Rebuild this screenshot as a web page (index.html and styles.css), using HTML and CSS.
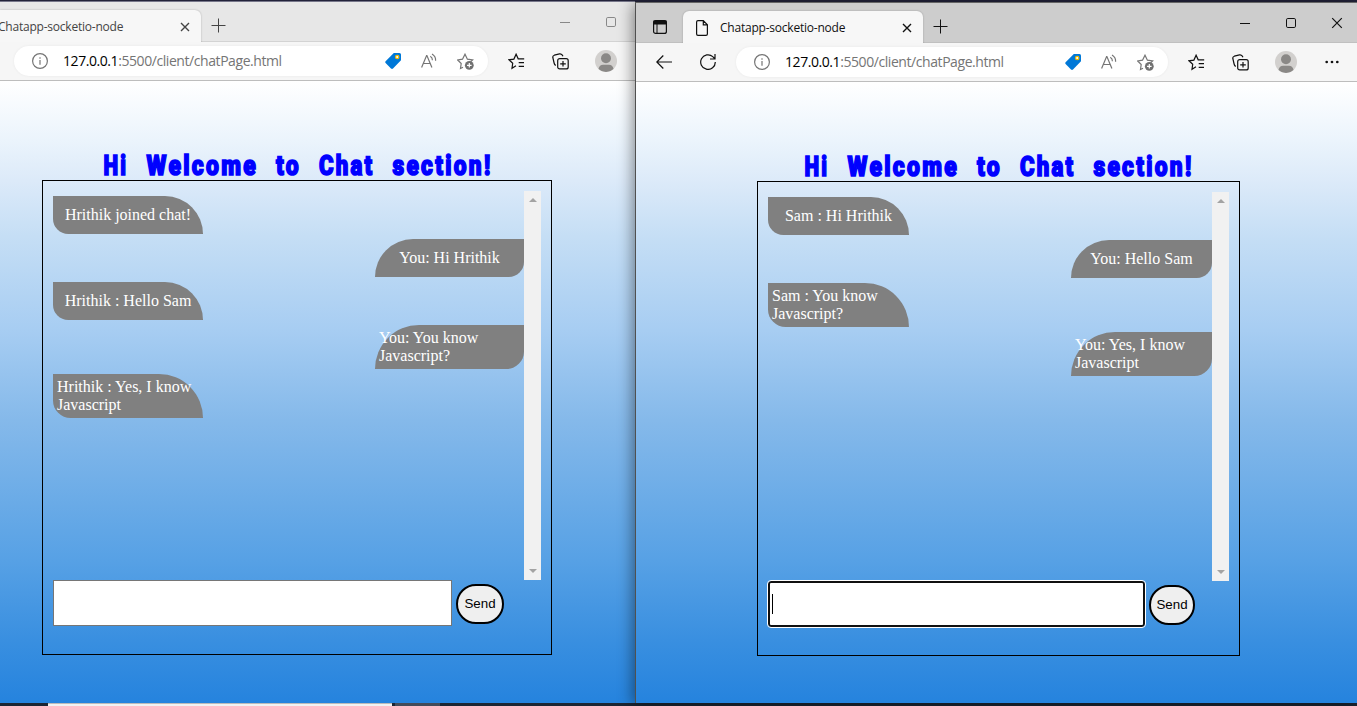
FILE: index.html
```html
<!DOCTYPE html>
<html lang="en">
<head>
<meta charset="utf-8">
<title>Chatapp-socketio-node</title>
<link rel="stylesheet" href="styles.css">
</head>
<body>
<svg class="defs" aria-hidden="true">
  <defs>
    <symbol id="close" viewBox="0 0 10 10"><path d="M1 1l8 8M9 1L1 9"/></symbol>
    <symbol id="plus" viewBox="0 0 15 15"><path d="M7.500 .5v14M.5 7.500h14"/></symbol>
    <symbol id="min" viewBox="0 0 10 10"><path d="M0 5.500h10"/></symbol>
    <symbol id="max" viewBox="0 0 10 10"><rect x=".5" y=".5" width="9" height="9" rx="1.300"/></symbol>
    <symbol id="info" viewBox="0 0 16 16"><circle cx="8" cy="8" r="7.400"/><path d="M8 7v4.700M8 4.300v1.400"/></symbol>
    <symbol id="tag" viewBox="0 0 16 16"><path d="M8.800 0H14.500Q16 0 16 1.500V7.200L8 15.500Q7 16.300 6 15.400L.6 10Q-.2 9 .6 8.200Z" fill="#0078d7" stroke="none"/><circle cx="12.200" cy="4" r="1.700" fill="#fff" stroke="#f0b800"/></symbol>
    <symbol id="read" viewBox="0 0 16 16"><path d="M.6 14.500L5.600 2.500h.3L10.900 14.500M2.300 10.500h6.900M9.300 3.200Q11.600 4.500 11.400 7.200M11 .9Q14.900 3.200 14.600 7.700"/></symbol>
    <symbol id="star" viewBox="0 0 17 17"><path d="M6 14.200L3.500 15.500 4.200 10.500.7 7l4.800-.8L8 1.200l2.400 5 5.200.8-2 1.700"/><circle cx="12.300" cy="12.300" r="4.400" fill="#707070" stroke="none"/><path d="M12.300 10v4.600M10 12.300h4.600" stroke="#fff"/></symbol>
    <symbol id="favs" viewBox="0 0 17 17"><path d="M8 12.800L4 15.300 4.700 10.300 1 6.800l4.900-.7L8.100 1.200l2.100 4.600h6M10.700 9.700H16M10.700 13.400H16"/></symbol>
    <symbol id="coll" viewBox="0 0 17 17"><rect x="5.700" y="5.700" width="10.500" height="10.200" rx="2"/><path d="M11 8v5.600M8.200 10.800h5.600M3.700 12.500Q2.500 11.700 2.100 10L.8 4.500Q.5 2.800 2.300 2.200L7.500.9Q9.800.4 11 3.300"/></symbol>
    <symbol id="avatar" viewBox="0 0 22 22"><circle cx="11" cy="11" r="11" fill="#d2d0ce" stroke="none"/><circle cx="11" cy="8.300" r="5" fill="#8a8886" stroke="none"/><path d="M3.500 19Q4.500 14.800 8 14.800H14Q17.500 14.800 18.500 19A11 11 0 0 1 3.500 19Z" fill="#8a8886" stroke="none"/></symbol>
    <symbol id="dots" viewBox="0 0 14 4"><g fill="#111" stroke="none"><circle cx="1.700" cy="2" r="1.350"/><circle cx="7" cy="2" r="1.350"/><circle cx="12.300" cy="2" r="1.350"/></g></symbol>
    <symbol id="back" viewBox="0 0 16 14"><path d="M16 7H.8M7.300.5L.8 7l6.500 6.500"/></symbol>
    <symbol id="reload" viewBox="0 0 16 16"><path d="M15.300 8A7.300 7.300 0 1 1 12.800 2.600L14.800 4.800M15 0v5h-5"/></symbol>
    <symbol id="panes" viewBox="0 0 14 14"><rect x=".6" y=".6" width="12.800" height="12.800" rx="2"/><path d="M1 1h12v3H1z" fill="#111"/><path d="M4 4v9.500" stroke-width="1"/></symbol>
    <symbol id="file" viewBox="0 0 12 16"><path d="M7.300.6H2Q.6.6.6 2V14Q.6 15.400 2 15.400H10Q11.400 15.400 11.400 14V4.800ZM7.300.6V4.800h4.100"/></symbol>
  </defs>
</svg>
<div class="desktop">
  <section class="window left">
    <header class="tabs">
      <div class="tab"><span class="title">Chatapp-socketio-node</span><svg class="x"><use href="#close"/></svg></div>
      <span class="newtab"><svg class="i15"><use href="#plus"/></svg></span>
      <div class="controls"><span><svg class="i10"><use href="#min"/></svg></span><span><svg class="i10"><use href="#max"/></svg></span></div>
    </header>
    <nav class="toolbar">
      <div class="address">
        <svg class="info"><use href="#info"/></svg>
        <span class="url"><b>127.0.0.1</b>:5500/client/chatPage.html</span>
        <span class="slot"><svg class="i16"><use href="#tag"/></svg></span><span class="slot"><svg class="i16"><use href="#read"/></svg></span><span class="slot"><svg class="i17"><use href="#star"/></svg></span>
      </div>
      <span class="tool"><svg class="i17"><use href="#favs"/></svg></span><span class="tool"><svg class="i17"><use href="#coll"/></svg></span><span class="tool wide"><svg class="i22"><use href="#avatar"/></svg></span>
    </nav>
    <main class="page">
      <div class="chat">
        <h1><svg class="heading" viewBox="0 0 390 34"><text x="1.500" y="27" textLength="24.500" lengthAdjust="spacingAndGlyphs">Hi</text><text x="44.500" y="27" textLength="111.500" lengthAdjust="spacingAndGlyphs">Welcome</text><text x="174" y="27" textLength="25" lengthAdjust="spacingAndGlyphs">to</text><text x="217" y="27" textLength="55.500" lengthAdjust="spacingAndGlyphs">Chat</text><text x="290.500" y="27" textLength="100" lengthAdjust="spacingAndGlyphs">section!</text></svg></h1>
        <div class="box">
          <div class="log">
            <div class="messages">
              <div class="msg in"><span>Hrithik joined chat!</span></div>
              <div class="msg out"><span>You: Hi Hrithik</span></div>
              <div class="msg in"><span>Hrithik : Hello Sam</span></div>
              <div class="msg out"><span>You: You know<br>Javascript?</span></div>
              <div class="msg in"><span>Hrithik : Yes, I know<br>Javascript</span></div>
            </div>
            <div class="scroll"><i class="up"></i><i class="down"></i></div>
          </div>
          <div class="form"><div class="field"></div><button class="send">Send</button></div>
        </div>
      </div>
    </main>
  </section>
  <section class="window right">
    <header class="tabs">
      <span class="panes"><svg class="i14"><use href="#panes"/></svg></span>
      <div class="tab"><svg class="file"><use href="#file"/></svg><span class="title">Chatapp-socketio-node</span><svg class="x"><use href="#close"/></svg></div>
      <span class="newtab"><svg class="i15"><use href="#plus"/></svg></span>
      <div class="controls"><span><svg class="i10"><use href="#min"/></svg></span><span><svg class="i10"><use href="#max"/></svg></span><span><svg class="i11"><use href="#close"/></svg></span></div>
    </header>
    <nav class="toolbar">
      <span class="tool back"><svg class="i16"><use href="#back"/></svg></span><span class="tool"><svg class="i16"><use href="#reload"/></svg></span>
      <div class="address">
        <svg class="info"><use href="#info"/></svg>
        <span class="url"><b>127.0.0.1</b>:5500/client/chatPage.html</span>
        <span class="slot"><svg class="i16"><use href="#tag"/></svg></span><span class="slot"><svg class="i16"><use href="#read"/></svg></span><span class="slot"><svg class="i17"><use href="#star"/></svg></span>
      </div>
      <span class="tool"><svg class="i17"><use href="#favs"/></svg></span><span class="tool"><svg class="i17"><use href="#coll"/></svg></span><span class="tool wide"><svg class="i22"><use href="#avatar"/></svg></span><span class="tool"><svg class="dots"><use href="#dots"/></svg></span>
    </nav>
    <main class="page">
      <div class="chat">
        <h1><svg class="heading" viewBox="0 0 390 34"><text x="1.500" y="27" textLength="24.500" lengthAdjust="spacingAndGlyphs">Hi</text><text x="44.500" y="27" textLength="111.500" lengthAdjust="spacingAndGlyphs">Welcome</text><text x="174" y="27" textLength="25" lengthAdjust="spacingAndGlyphs">to</text><text x="217" y="27" textLength="55.500" lengthAdjust="spacingAndGlyphs">Chat</text><text x="290.500" y="27" textLength="100" lengthAdjust="spacingAndGlyphs">section!</text></svg></h1>
        <div class="box">
          <div class="log">
            <div class="messages">
              <div class="msg in"><span>Sam : Hi Hrithik</span></div>
              <div class="msg out"><span>You: Hello Sam</span></div>
              <div class="msg in"><span>Sam : You know<br>Javascript?</span></div>
              <div class="msg out"><span>You: Yes, I know<br>Javascript</span></div>
            </div>
            <div class="scroll"><i class="up"></i><i class="down"></i></div>
          </div>
          <div class="form"><div class="field focused"><i class="caret"></i></div><button class="send">Send</button></div>
        </div>
      </div>
    </main>
  </section>
</div>
<footer class="taskbar"><i class="search"></i><i class="task"></i></footer>
</body>
</html>
```
FILE: styles.css
```css
* { box-sizing: border-box; }
body { margin: 0; width: 1357px; height: 706px; overflow: hidden; background: #23233a; font-family: "Open Sans", sans-serif; }
svg { display: block; fill: none; stroke: currentColor; stroke-width: 1.2; flex: none; }
.defs { position: absolute; width: 0; height: 0; }
.desktop { display: flex; height: 703px; }
.window { display: flex; flex-direction: column; overflow: hidden; }
.left { width: 635px; margin-top: 1px; border-top: 1px solid #77778a; }
.right { width: 722px; margin-top: 2px; border-top: 1px solid #666; border-left: 1px solid #505050; z-index: 1; box-shadow: -2px 2px 14px rgba(0,0,0,.45); }

.tabs { display: flex; height: 40px; flex: none; background: #e7e7e7; border-bottom: 1px solid #d3d3d3; color: #444; }
.right .tabs { background: #cdcdcd; border-color: #c0c0c0; color: #111; }
.tab { display: flex; align-items: center; width: 201px; height: 33px; margin-top: 8px; padding-right: 11px; background: #f7f7f7; border-radius: 0 6px 0 0; box-shadow: 0 0 2px rgba(0,0,0,.25); }
.right .tab { width: 240px; padding: 0 11px 0 13px; border-radius: 6px 6px 0 0; }
.title { flex: 1; margin-left: -2px; font-size: 12px; line-height: 18px; white-space: nowrap; letter-spacing: -.22px; }
.right .title { margin-left: 12px; }
.x { width: 10px; height: 10px; stroke-width: 1.4; }
.file { width: 12px; height: 16px; }
.panes { display: flex; width: 47px; padding-top: 8px; align-items: center; justify-content: center; }
.newtab { display: flex; width: 34px; padding-top: 8px; align-items: center; justify-content: center; }
.controls { display: flex; margin-left: auto; margin-right: 1px; }
.left .controls { color: #888; }
.right .controls { margin-right: -3px; }
.controls span { display: flex; width: 46px; align-items: center; justify-content: center; }
.controls svg { stroke-width: 1; }
.i10 { width: 10px; height: 10px; }
.i11 { width: 12px; height: 12px; }
.i14 { width: 14px; height: 14px; }
.i15 { width: 15px; height: 15px; stroke-width: 1; }
.i16 { width: 16px; height: 16px; }
.i17 { width: 17px; height: 17px; }
.i22 { width: 22px; height: 22px; }
.dots { width: 14px; height: 4px; }

.toolbar { display: flex; align-items: center; height: 39px; flex: none; padding-left: 14px; background: #f6f6f6; border-bottom: 1px solid #bdbdbd; color: #111; }
.left .toolbar { padding-right: 5px; }
.right .toolbar { padding-left: 6px; padding-right: 3px; }
.address { display: flex; align-items: center; flex: 1; height: 30px; margin-right: 6px; padding: 0 5px 0 18px; border-radius: 15px; background: #fff; color: #757575; box-shadow: 0 0 3px rgba(0,0,0,.06); }
.right .address { margin-left: 6px; }
.info { width: 16px; height: 16px; }
.url { flex: 1; margin-left: 15px; font-size: 14px; line-height: 20px; letter-spacing: -.43px; white-space: nowrap; }
.url b { font-weight: 400; color: #000; }
.slot { display: flex; width: 36px; justify-content: center; }
.tool { display: flex; width: 44px; justify-content: center; }
.wide { width: 48px; }

.page { flex: 1; background: linear-gradient(#fff 0%, #ebf4fc 9.500%, #dceaf9 16%, #c5def5 25%, #a7cdf2 40%, #85b9ea 54.500%, #57a1e5 77%, #398fe0 90%, #2583de 100%); }
.chat { width: 510px; margin: 67px 0 0 42px; }
.right .chat { width: 483px; margin-left: 121px; }
h1 { margin: 0; height: 32px; display: flex; justify-content: center; }
.right h1 { padding-right: 1px; }
.heading { width: 390px; height: 34px; overflow: visible; font: 900 28px Roboto, sans-serif; letter-spacing: 2.8px; fill: #00f; stroke: #00f; stroke-width: 1.6; }
.box { height: 475px; border: 1px solid #000; padding: 10px; }
.log { display: flex; height: 389px; }
.messages { flex: 1; display: flex; flex-direction: column; gap: 5px; padding-top: 5px; }
.msg { display: flex; align-items: center; justify-content: center; width: 150px; height: 38px; background: gray; color: #fff; font: 16px/18px "Liberation Serif", serif; white-space: nowrap; }
.right .msg { width: 141px; }
.msg:has(br) { height: 44px; justify-content: flex-start; padding-left: 4px; }
.in { border-radius: 0 50px 0 20px; }
.out { align-self: flex-end; border-radius: 50px 0 20px 0; }
.left .out { width: 149px; }
.scroll { display: flex; flex-direction: column; justify-content: space-between; align-items: center; width: 17px; padding: 7px 0; background: #f1f1f1; }
.up, .down { border: 4px solid transparent; }
.up { border-top: 0; border-bottom-color: #a3a3a3; }
.down { border-bottom: 0; border-top-color: #a3a3a3; }
.form { display: flex; align-items: center; gap: 4px; height: 46px; }
.field { width: 399px; height: 46px; background: #fff; border: 1px solid #767676; }
.focused { width: 377px; border: 2px solid #101010; border-radius: 3px; outline: 1px solid #fff; padding: 11px 2px; }
.caret { display: block; width: 1px; height: 20px; background: #000; }
.send { width: 48px; height: 40px; margin-top: 2px; padding: 0 0 1px; border: 2px solid #000; border-radius: 20px; background: #efefef; color: #000; font: 13.333px "Liberation Sans", sans-serif; }
.right .send { width: 46px; }

.taskbar { display: flex; gap: 3px; height: 3px; padding-left: 48px; background: #1c2533; }
.search { width: 344px; background: #f2f2f2; border-top: 1px solid #bbb; }
.task { width: 45px; background: #434b5a; }
```
